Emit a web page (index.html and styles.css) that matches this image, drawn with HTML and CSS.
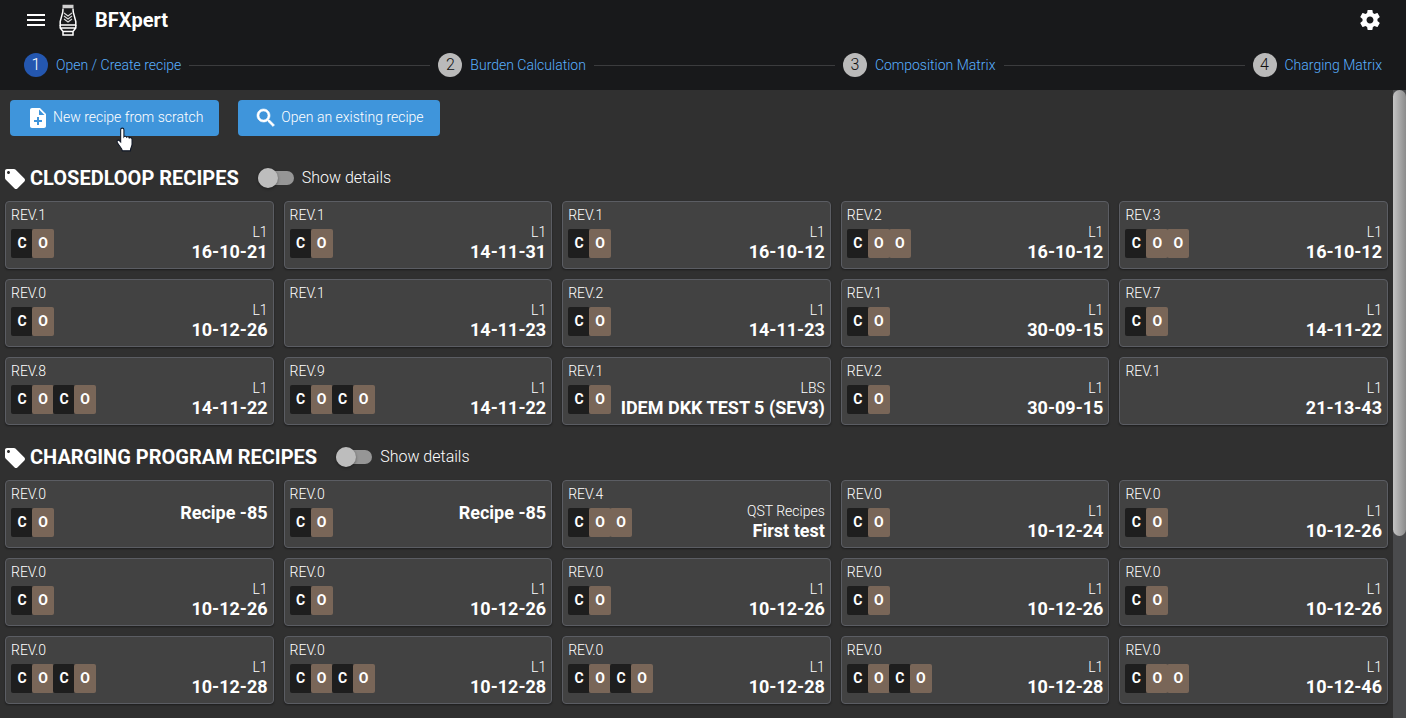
FILE: index.html
```html
<!DOCTYPE html>
<html lang="en">
<head>
<meta charset="utf-8">
<title>BFXpert</title>
<link rel="stylesheet" href="styles.css">
</head>
<body>
<header class="top">
  <div class="bar">
    <button class="icon-btn menu" aria-label="Menu"><svg width="24" height="24" viewBox="0 0 24 24"><path d="M3 18h18v-2H3v2zm0-5h18v-2H3v2zm0-7v2h18V6H3z"/></svg></button>
    <svg class="logo" width="20" height="34" viewBox="0 0 20 34">
      <path d="M5 5.500 4.800 9 2.200 18.500V22h15.600v-3.500L15.200 9 15 5.500" fill="none" stroke="#fff" stroke-width="1.500"/>
      <path d="M4.500 3.500h11" stroke="#d0d0d0" stroke-width="3.500"/>
      <path d="M2.200 22v3L5 28.500h10l2.800-3.500v-3M5 28.500v3.500h10v-3.500M2 25h16" fill="none" stroke="#fff" stroke-width="1.500"/>
      <path d="m6 10 4 3 4-3M6 13l4 3 4-3M6 16l4 3 4-3" fill="none" stroke="#d8d8d8" stroke-width="1.200"/>
    </svg>
    <h1 class="brand">BFXpert</h1>
    <button class="icon-btn gear" aria-label="Settings"><svg width="24" height="24" viewBox="0 0 24 24"><path d="M19.430 12.980c.04-.32.070-.64.070-.98s-.03-.66-.07-.98l2.110-1.650c.19-.15.240-.42.120-.64l-2-3.460c-.12-.22-.39-.3-.61-.22l-2.490 1c-.52-.4-1.080-.73-1.690-.98l-.38-2.650C14.460 2.180 14.250 2 14 2h-4c-.25 0-.46.180-.49.420l-.38 2.650c-.61.250-1.170.590-1.690.980l-2.490-1c-.23-.09-.49 0-.61.220l-2 3.460c-.13.220-.07.490.120.640l2.110 1.650c-.04.320-.07.650-.07.980s.030.660.070.980l-2.110 1.650c-.19.150-.24.420-.12.640l2 3.460c.12.220.39.300.61.220l2.490-1c.52.400 1.080.730 1.690.980l.38 2.650c.03.240.24.420.49.420h4c.25 0 .46-.18.490-.42l.38-2.650c.61-.25 1.170-.59 1.690-.98l2.490 1c.23.090.49 0 .61-.22l2-3.460c.12-.22.070-.49-.12-.64l-2.110-1.650zM12 15.500c-1.930 0-3.500-1.570-3.500-3.500s1.570-3.500 3.500-3.500 3.500 1.570 3.500 3.500-1.570 3.500-3.500 3.500z"/></svg></button>
  </div>
  <nav class="steps">
    <a class="step current" href="#open"><span class="num">1</span>Open / Create recipe</a><span class="line"></span>
    <a class="step" href="#burden"><span class="num">2</span>Burden Calculation</a><span class="line"></span>
    <a class="step" href="#composition"><span class="num">3</span>Composition Matrix</a><span class="line"></span>
    <a class="step" href="#charging"><span class="num">4</span>Charging Matrix</a>
  </nav>
</header>
<div class="body">
  <main class="content">
    <div class="actions">
      <button class="action"><svg width="24" height="24" viewBox="0 0 24 24"><path d="M14 2H6c-1.100 0-2 .9-2 2v16c0 1.100.89 2 1.990 2H18c1.100 0 2-.9 2-2V8l-6-6zm2 14h-3v3h-2v-3H8v-2h3v-3h2v3h3v2zm-3-7V3.500L18.500 9H13z"/></svg><span>New recipe from scratch</span></button>
      <button class="action"><svg width="24" height="24" viewBox="0 0 24 24"><path d="M15.500 14h-.79l-.28-.27C15.410 12.590 16 11.110 16 9.500 16 5.910 13.090 3 9.500 3S3 5.910 3 9.500 5.910 16 9.500 16c1.610 0 3.090-.59 4.230-1.570l.27.280v.79l5 4.990L20.490 19l-4.990-5zm-6 0C7.010 14 5 11.990 5 9.500S7.010 5 9.500 5 14 7.010 14 9.500 11.990 14 9.500 14z" stroke="#fff" stroke-width=".6"/></svg><span>Open an existing recipe</span></button>
      <svg class="pointer" width="20" height="26" viewBox="0 0 18 24"><path d="M5 2.500c0-2 3-2 3 0V9c.6-.8 2.300-.6 2.500.4.700-.7 2.200-.4 2.400.7.900-.6 2.600-.2 2.600 1.400v4.500c0 2-1.500 3-1.500 6H6.500c0-2-2.500-4-4.500-7.500-1-2 .8-3 2-1.800l1 1z" fill="#fff" stroke="#111827"/></svg>
    </div>
    <section class="group">
      <div class="heading">
        <svg width="24" height="24" viewBox="0 0 24 24"><path d="m21.410 11.580-9-9C12.050 2.220 11.550 2 11 2H4c-1.100 0-2 .9-2 2v7c0 .55.220 1.050.59 1.420l9 9c.36.360.86.580 1.410.58s1.050-.22 1.410-.59l7-7c.37-.36.590-.86.590-1.410s-.23-1.060-.59-1.420zM5.500 7C4.670 7 4 6.330 4 5.500S4.670 4 5.500 4 7 4.670 7 5.500 6.330 7 5.500 7z"/></svg>
        <h2>CLOSEDLOOP RECIPES</h2>
        <label class="toggle"><input type="checkbox">Show details</label>
      </div>
      <div class="grid" id="closedloop"></div>
    </section>
    <section class="group">
      <div class="heading">
        <svg width="24" height="24" viewBox="0 0 24 24"><path d="m21.410 11.580-9-9C12.050 2.220 11.550 2 11 2H4c-1.100 0-2 .9-2 2v7c0 .55.220 1.050.59 1.420l9 9c.36.360.86.580 1.410.58s1.050-.22 1.410-.59l7-7c.37-.36.590-.86.590-1.410s-.23-1.060-.59-1.420zM5.500 7C4.670 7 4 6.330 4 5.500S4.670 4 5.500 4 7 4.670 7 5.500 6.330 7 5.500 7z"/></svg>
        <h2>CHARGING PROGRAM RECIPES</h2>
        <label class="toggle"><input type="checkbox">Show details</label>
      </div>
      <div class="grid" id="charging-program"></div>
    </section>
  </main>
  <div class="rail"><div class="thumb"></div></div>
</div>
<script src="app.js"></script>
</body>
</html>
```
FILE: app.js
```js
const closedloop = [
  [1, "CO", "L1", "16-10-21"], [1, "CO", "L1", "14-11-31"], [1, "CO", "L1", "16-10-12"], [2, "COO", "L1", "16-10-12"], [3, "COO", "L1", "16-10-12"],
  [0, "CO", "L1", "10-12-26"], [1, "", "L1", "14-11-23"], [2, "CO", "L1", "14-11-23"], [1, "CO", "L1", "30-09-15"], [7, "CO", "L1", "14-11-22"],
  [8, "COCO", "L1", "14-11-22"], [9, "COCO", "L1", "14-11-22"], [1, "CO", "LBS", "IDEM DKK TEST 5 (SEV3)"], [2, "CO", "L1", "30-09-15"], [1, "", "L1", "21-13-43"]
];
const charging = [
  [0, "CO", "", "Recipe -85"], [0, "CO", "", "Recipe -85"], [4, "COO", "QST Recipes", "First test"], [0, "CO", "L1", "10-12-24"], [0, "CO", "L1", "10-12-26"],
  [0, "CO", "L1", "10-12-26"], [0, "CO", "L1", "10-12-26"], [0, "CO", "L1", "10-12-26"], [0, "CO", "L1", "10-12-26"], [0, "CO", "L1", "10-12-26"],
  [0, "COCO", "L1", "10-12-28"], [0, "COCO", "L1", "10-12-28"], [0, "COCO", "L1", "10-12-28"], [0, "COCO", "L1", "10-12-28"], [0, "COO", "L1", "10-12-46"]
];

function card([rev, layers, group, name]) {
  const chips = [...layers].map(l => `<span class="chip chip-${l.toLowerCase()}">${l}</span>`).join("");
  const groupLine = group ? `<span class="family">${group}</span>` : "";
  return `<button class="card"><span class="left"><span class="rev">REV.${rev}</span><span class="chips">${chips}</span></span>` +
    `<span class="right${group ? "" : " single"}">${groupLine}<strong class="name">${name}</strong></span></button>`;
}

document.getElementById("closedloop").innerHTML = closedloop.map(card).join("");
document.getElementById("charging-program").innerHTML = charging.map(card).join("");
```
FILE: styles.css
```css
* { box-sizing: border-box; }
body {
  margin: 0;
  height: 100vh;
  display: flex;
  flex-direction: column;
  overflow: hidden;
  background: #303030;
  color: #fff;
  font: 300 14px/20px Roboto, sans-serif;
}
button { font: inherit; color: inherit; border: 0; cursor: pointer; }
svg { fill: #fff; flex: none; }
h1, h2 { margin: 0; font-size: 20px; line-height: 24px; font-weight: 700; }

.top { background: #18191b; }
.bar { display: flex; align-items: center; height: 40px; padding: 0 24px; }
.icon-btn { display: flex; padding: 0; background: none; }
.logo { margin: 0 17px 0 10px; }
.gear { margin-left: auto; }
.steps { display: flex; align-items: center; gap: 8px; height: 50px; padding: 0 24px; }
.step { display: flex; align-items: center; gap: 8px; color: #58b0ff; text-decoration: none; }
.num {
  width: 24px;
  height: 24px;
  border-radius: 50%;
  background: #bababa;
  color: #101010;
  font-size: 16px;
  line-height: 24px;
  text-align: center;
}
.current .num { background: #2457b0; color: #fff; }
.line { flex: 1; height: 1px; background: #3b3c3e; }

.body { flex: 1; min-height: 0; display: flex; }
.content { flex: 1; min-width: 0; overflow: hidden; padding: 10px 5px; }
.actions { position: relative; display: flex; gap: 19px; padding: 0 5px; }
.action {
  display: flex;
  align-items: center;
  gap: 3px;
  height: 36px;
  padding: 0 16px;
  border-radius: 4px;
  background: #3f95db;
}
.action span { padding-bottom: 2px; }
.pointer { position: absolute; left: 110px; top: 27px; }

.group { margin-bottom: 18px; }
.actions + .group { padding-top: 28px; }
.heading { display: flex; align-items: center; height: 28px; margin-bottom: 9px; }
.heading svg { margin: 2px 3px 0 -2px; }
.toggle { display: flex; align-items: center; gap: 8px; margin-left: 19px; font-size: 16px; }
.toggle input {
  appearance: none;
  display: flex;
  align-items: center;
  width: 36px;
  height: 14px;
  margin: 0;
  border-radius: 7px;
  background: #969696;
}
.toggle input::before {
  content: "";
  width: 20px;
  height: 20px;
  border-radius: 50%;
  background: #bdbdbd;
  box-shadow: 0 1px 3px #0006;
}
.toggle input:checked { justify-content: flex-end; }

.grid { display: grid; grid-template-columns: repeat(5, minmax(0, 1fr)); gap: 10px; }
.card {
  display: flex;
  justify-content: space-between;
  height: 68px;
  padding: 3px 5px;
  border: 1px solid #5b5d63;
  border-radius: 4px;
  background: #424242;
  box-shadow: 0 1px 2px #0006;
}
.left { display: flex; flex-direction: column; align-items: flex-start; gap: 4px; }
.chips { display: flex; }
.chip {
  width: 22px;
  height: 29px;
  margin-right: -1px;
  border-radius: 2px;
  font-size: 14px;
  font-weight: 700;
  line-height: 29px;
  text-align: center;
}
.chip-c { background: #1e1e1e; }
.chip-o { background: #796658; }
.right { display: flex; flex-direction: column; align-items: flex-end; align-self: flex-end; padding-bottom: 3px; }
.right.single { align-self: center; }
.name { font-size: 18px; font-weight: 700; line-height: 20px; }

.rail { width: 13px; background: #4a4b4d; }
.thumb { height: 71%; border-radius: 7px; background: linear-gradient(90deg, #c4c4c4, #8c8c8c); }
```
